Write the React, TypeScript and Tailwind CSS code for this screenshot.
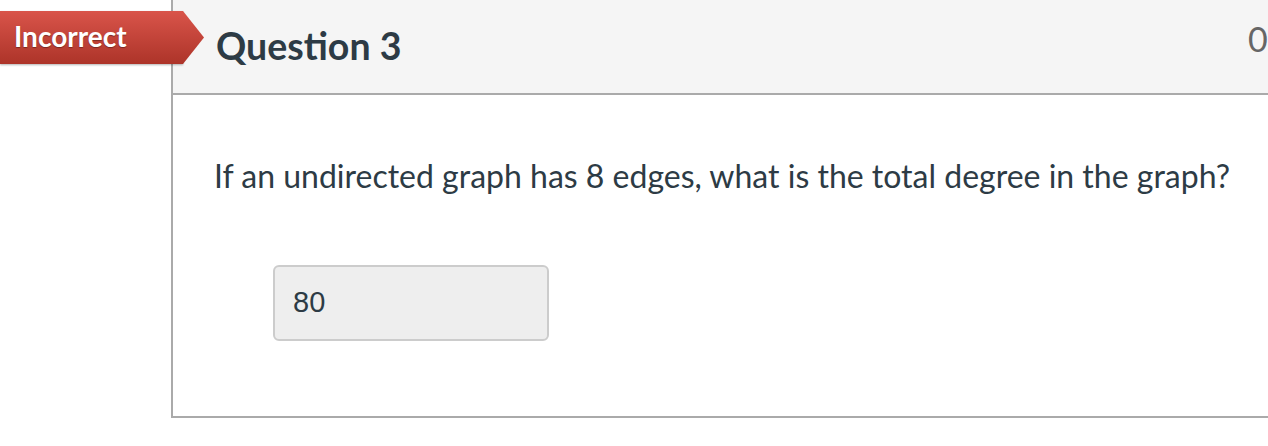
export default function App() {
    return (
        <div className="relative w-[1268px] h-[446px] bg-white overflow-hidden" style={{ fontFamily: "Lato, 'Noto Sans', sans-serif" }}>
            <div className="flex">
                <div className="w-[171px] shrink-0" />
                <div className="w-[1097px] shrink-0 border-l-2 border-b-2 border-[#aaaaaa] h-[418px] flex flex-col">
                    <div className="h-[95px] bg-[#f5f5f5] border-b-2 border-[#aaaaaa] flex items-center pl-[43px] pb-[1px]">
                        <h2 className="w-[1032px] shrink-0 text-[37.5px] font-bold text-[#2d3b45] leading-none">Question 3</h2>
                        <span className="text-[34px] text-[#666666] leading-none -mt-[14px] whitespace-nowrap">0</span>
                    </div>
                    <div className="pl-[41px] pt-[61px]">
                        <p className="text-[32px] text-[#2d3b45] leading-[40px] whitespace-nowrap">
                            If an undirected graph has 8 edges, what is the total degree in the graph?
                        </p>
                        <div className="mt-[69px] ml-[59px] w-[276px] h-[76px] bg-[#eeeeee] border-2 border-[#cccccc] rounded-[6px] flex items-center pl-[18px]">
                            <span className="text-[29px] text-[#2d3b45]" style={{ fontFamily: "'Liberation Sans', Arial, sans-serif" }}>80</span>
                        </div>
                    </div>
                </div>
            </div>
            <div className="absolute left-0 top-[11px] h-[53px] w-[204px] flex items-center">
                <div className="h-full w-[183px] bg-gradient-to-b from-[#d9544a] to-[#ad3429] flex items-center pl-[14px] shadow-[0_1px_2px_rgba(0,0,0,0.3)]">
                    <span className="text-[28px] font-bold text-white leading-none -mt-[3px] [text-shadow:0_1px_1px_rgba(0,0,0,0.35)]">Incorrect</span>
                </div>
                <svg width="21" height="53" viewBox="0 0 21 53" className="block">
                    <defs>
                        <linearGradient id="tip" x1="0" y1="0" x2="0" y2="1">
                            <stop offset="0" stopColor="#d9544a" />
                            <stop offset="1" stopColor="#ad3429" />
                        </linearGradient>
                    </defs>
                    <polygon points="0,0 21,26.5 0,53" fill="url(#tip)" />
                </svg>
            </div>
        </div>
    );
}
